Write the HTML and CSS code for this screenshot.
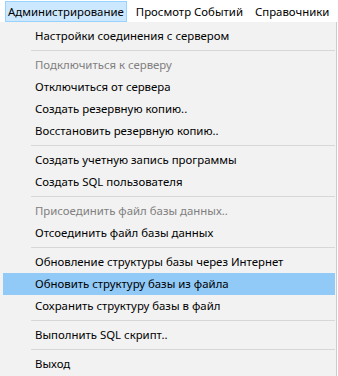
FILE: index.html
```html
<!DOCTYPE html>
<html>
<head>
	<meta charset="utf-8"/>
	<title>Администрирование</title>
	<link rel="stylesheet" href="styles.css">
</head>
<body>
<div class="menubar">
	<span class="mtop active">Администрирование</span>
	<span class="mtop">Просмотр Событий</span>
	<span class="mtop">Справочники</span>
</div>
<div class="dropdown">
	<div class="item">Настройки соединения с сервером</div>
	<div class="sep"></div>
	<div class="item off">Подключиться к серверу</div>
	<div class="item">Отключиться от сервера</div>
	<div class="item">Создать резервную копию..</div>
	<div class="item">Восстановить резервную копию..</div>
	<div class="sep"></div>
	<div class="item">Создать учетную запись программы</div>
	<div class="item">Создать SQL пользователя</div>
	<div class="sep"></div>
	<div class="item off">Присоединить файл базы данных..</div>
	<div class="item">Отсоединить файл базы данных</div>
	<div class="sep"></div>
	<div class="item">Обновление структуры базы через Интернет</div>
	<div class="item hover">Обновить структуру базы из файла</div>
	<div class="item">Сохранить структуру базы в файл</div>
	<div class="sep"></div>
	<div class="item">Выполнить SQL скрипт..</div>
	<div class="sep"></div>
	<div class="item">Выход</div>
</div>
</body>
</html>
```

FILE: styles.css
```css
body{
	margin: 0px;
	background-color: #ffffff;
	font-family: "Noto Sans", "DejaVu Sans", sans-serif;
	font-size: 11.4px;
	color: #000000;
	overflow: hidden;
}
.menubar{
	height: 22px;
	display: flex;
	align-items: center;
	padding-left: 5px;
	white-space: nowrap;
}
.mtop{
	height: 19px;
	line-height: 19px;
	padding: 0 2px 0 2px;
	margin-right: 6px;
	border: 1px solid transparent;
}
.mtop.active{
	background-color: #cce8ff;
	border-color: #99d1ff;
}
.dropdown{
	width: 332px;
	background-color: #f2f2f2;
	border-right: 1px solid #cccccc;
	padding: 3px 1px 0 3px;
	height: 360px;
}
.item{
	height: 22px;
	line-height: 22px;
	padding-left: 32px;
	white-space: nowrap;
}
.item.off{
	color: #808080;
}
.item.hover{
	background-color: #91c9f7;
}
.sep{
	height: 1px;
	margin: 3px 0 3px 28px;
	background-color: #d7d7d7;
}
```
